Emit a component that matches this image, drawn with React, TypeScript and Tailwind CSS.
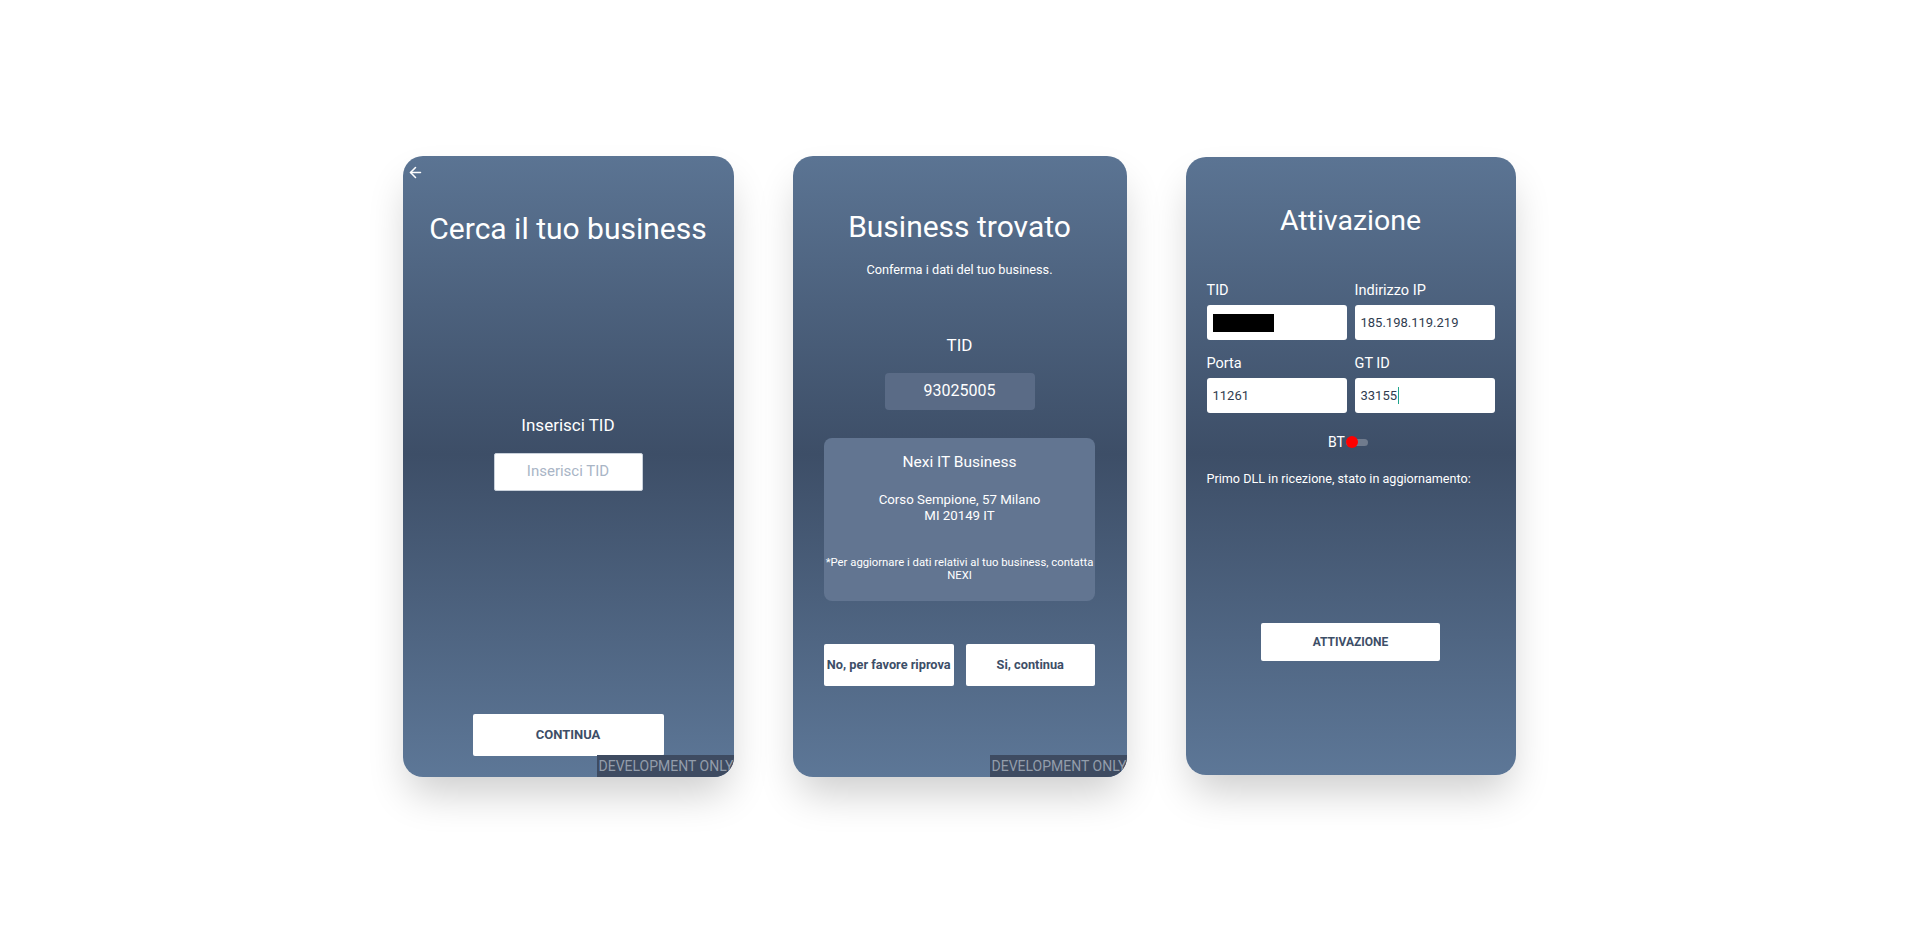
import { ArrowLeft } from 'lucide-react';

// Schermate di attivazione del terminale, affiancate per la review
const cardBase =
  "relative overflow-hidden rounded-[20px] bg-[linear-gradient(180deg,#5b7493_0%,#3d4e67_48%,#5d7797_100%)] shadow-[0_22px_40px_-6px_rgba(0,0,0,0.2)] font-['Roboto',sans-serif] text-white";

function DevBanner() {
  return (
    <div className="absolute bottom-0 right-0 h-[22px] w-[137px] overflow-hidden whitespace-nowrap bg-[#3e4b61] pl-[2px] text-[14px] leading-[22px] text-[#939dab]">
      DEVELOPMENT ONLY
    </div>
  );
}

function CercaBusiness() {
  return (
    <section className={`${cardBase} h-[621px] w-[331px]`}>
      <div className="flex flex-col items-center">
        <div className="flex w-full pl-[4px] pt-[8px]">
          <ArrowLeft className="h-[17px] w-[17px]" strokeWidth={2.2} />
        </div>
        <h1 className="mt-[29px] text-[30px] leading-[38px]">Cerca il tuo business</h1>
        <p className="mt-[166px] text-[17px] leading-[22px]">Inserisci TID</p>
        <div className="mt-[17px] flex h-[38px] w-[149px] items-center justify-center rounded-[2px] border border-[#c8d0da] bg-white text-[15px] text-[#a9b5c6]">
          Inserisci TID
        </div>
        <button className="mt-[223px] h-[42px] w-[191px] rounded-[2px] bg-white text-[13px] font-bold text-[#3d4e67]">
          CONTINUA
        </button>
      </div>
      <DevBanner />
    </section>
  );
}

function BusinessTrovato() {
  return (
    <section className={`${cardBase} h-[621px] w-[334px]`}>
      <div className="flex flex-col items-center">
        <h1 className="mt-[52px] text-[30px] leading-[38px]">Business trovato</h1>
        <p className="mt-[15px] text-[12.75px] leading-[18px]">Conferma i dati del tuo business.</p>
        <p className="mt-[55px] text-[17px] leading-[22px]">TID</p>
        <div className="mt-[17px] flex h-[37px] w-[150px] items-center justify-center rounded-[4px] bg-[#5a6b86] text-[16px]">
          93025005
        </div>
        <div className="mt-[28px] flex h-[163px] w-[271px] flex-col items-center rounded-[8px] bg-[#627591] text-center">
          <p className="mt-[14px] text-[15.5px] leading-[20px]">Nexi IT Business</p>
          <p className="mt-[20px] text-[13.25px] leading-[16px]">
            Corso Sempione, 57 Milano
            <br />
            MI 20149 IT
          </p>
          <p className="mt-[32px] text-[11.3px] leading-[13px]">
            *Per aggiornare i dati relativi al tuo business, contatta
            <br />
            NEXI
          </p>
        </div>
        <div className="mt-[43px] flex w-[271px] gap-[12px]">
          <button className="h-[42px] flex-1 rounded-[2px] bg-white text-[12.75px] font-bold text-[#3d4e67]">
            No, per favore riprova
          </button>
          <button className="h-[42px] flex-1 rounded-[2px] bg-white text-[12.75px] font-bold text-[#3d4e67]">
            Si, continua
          </button>
        </div>
      </div>
      <DevBanner />
    </section>
  );
}

function Field({ label, children }: { label: string; children: React.ReactNode }) {
  return (
    <div className="flex flex-col">
      <span className="text-[14.5px] leading-[20px]">{label}</span>
      <div className="mt-[4px] flex h-[35px] items-center rounded-[3px] bg-white px-[6px] text-[13px] text-[#2f3c4f]">
        {children}
      </div>
    </div>
  );
}

function Attivazione() {
  return (
    <section className={`${cardBase} h-[618px] w-[330px]`}>
      <div className="flex flex-col px-[21px]">
        <h1 className="mt-[45px] text-center text-[28.5px] leading-[38px]">Attivazione</h1>
        <div className="mt-[41px] grid grid-cols-2 gap-x-[8px] gap-y-[14px]">
          <Field label="TID">
            <span className="h-[18px] w-[61px] bg-black" />
          </Field>
          <Field label="Indirizzo IP">185.198.119.219</Field>
          <Field label="Porta">11261</Field>
          <Field label="GT ID">
            33155<span className="ml-[1px] h-[17px] w-[1px] bg-[#1fa58c]" />
          </Field>
        </div>
        <div className="mt-[20px] flex items-center justify-center pr-[5px]">
          <span className="text-[14px] leading-[18px]">BT</span>
          <span className="relative ml-[1px] flex h-[12px] w-[22px] items-center">
            <span className="h-[7px] w-full rounded-full bg-[#707b8d]" />
            <span className="absolute left-0 top-0 h-[12px] w-[12px] rounded-full bg-[#ff0000]" />
          </span>
        </div>
        <p className="mt-[19px] text-[12.6px] leading-[18px]">Primo DLL in ricezione, stato in aggiornamento:</p>
        <button className="mx-auto mt-[135px] h-[38px] w-[179px] rounded-[2px] bg-white text-[12px] font-bold text-[#3d4e67]">
          ATTIVAZIONE
        </button>
      </div>
    </section>
  );
}

export default function App() {
  return (
    <main className="flex h-[932px] w-full items-center justify-center gap-[59px] bg-white pr-[2px]">
      <CercaBusiness />
      <BusinessTrovato />
      <Attivazione />
    </main>
  );
}
